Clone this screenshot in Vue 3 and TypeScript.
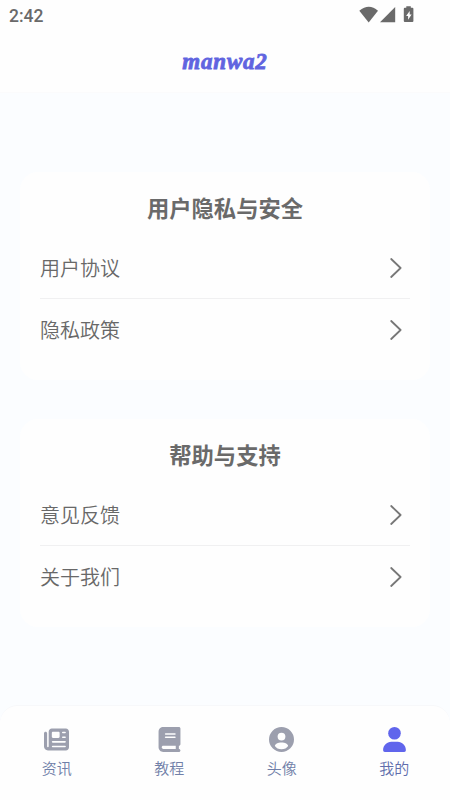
<script setup lang="ts">
interface Section {
  title: string
  items: string[]
}

interface Tab {
  label: string
  icon: 'news' | 'book' | 'avatar' | 'user'
  active?: boolean
}

const sections: Section[] = [
  { title: '用户隐私与安全', items: ['用户协议', '隐私政策'] },
  { title: '帮助与支持', items: ['意见反馈', '关于我们'] },
]

const tabs: Tab[] = [
  { label: '资讯', icon: 'news' },
  { label: '教程', icon: 'book' },
  { label: '头像', icon: 'avatar' },
  { label: '我的', icon: 'user', active: true },
]
</script>

<template>
  <div class="app">
    <header class="header">
      <div class="status">
        <span class="time">2:42</span>
        <svg class="status-icons" width="58" height="18" viewBox="0 0 58 18">
          <path d="M.3 5.2Q10-3 19 5.2L9.7 16.8Z" transform="translate(0 .6)" />
          <path d="M36.2 2v15.2H21Z" />
          <path
            fill-rule="evenodd"
            d="M47.3 1.2h4.5v1.5h1.600q1 0 1 1v12.400q0 1-1 1h-7.600q-1 0-1-1V3.700q0-1 1-1h1.500zM50.700 6l-3.600 5h2v3.800l3.500-5.200h-1.900z"
          />
        </svg>
      </div>
      <div class="brand">manwa2</div>
    </header>

    <main class="content">
      <section v-for="section in sections" :key="section.title" class="card">
        <h2 class="card-title">{{ section.title }}</h2>
        <ul class="list">
          <li v-for="item in section.items" :key="item" class="row">
            <span>{{ item }}</span>
            <svg class="chevron" width="12" height="20" viewBox="0 0 12 20">
              <path d="M1.200 1 10.600 10 1.200 19" />
            </svg>
          </li>
        </ul>
      </section>
    </main>

    <nav class="tabbar">
      <a v-for="tab in tabs" :key="tab.label" class="tab" :class="{ active: tab.active }">
        <svg v-if="tab.icon === 'news'" class="icon" viewBox="0 0 512 512">
          <path
            d="M96 96c0-35.3 28.7-64 64-64H448c35.3 0 64 28.7 64 64V416c0 35.3-28.7 64-64 64H80c-44.2 0-80-35.8-80-80V128c0-17.7 14.3-32 32-32s32 14.3 32 32V400c0 8.8 7.2 16 16 16s16-7.2 16-16V96zm64 24v80c0 13.3 10.7 24 24 24H296c13.3 0 24-10.7 24-24V120c0-13.3-10.7-24-24-24H184c-13.3 0-24 10.7-24 24zm208-8c0 8.8 7.2 16 16 16h48c8.8 0 16-7.2 16-16s-7.2-16-16-16H384c-8.8 0-16 7.2-16 16zm0 96c0 8.8 7.2 16 16 16h48c8.8 0 16-7.2 16-16s-7.2-16-16-16H384c-8.8 0-16 7.2-16 16zM160 304c0 8.8 7.2 16 16 16H432c8.8 0 16-7.2 16-16s-7.2-16-16-16H176c-8.8 0-16 7.2-16 16zm0 96c0 8.8 7.2 16 16 16H432c8.8 0 16-7.2 16-16s-7.2-16-16-16H176c-8.8 0-16 7.2-16 16z"
          />
        </svg>
        <svg v-else-if="tab.icon === 'book'" class="icon" viewBox="-32 0 512 512">
          <path
            d="M96 0C43 0 0 43 0 96V416c0 53 43 96 96 96H416c17.7 0 32-14.3 32-32s-14.3-32-32-32V384c17.7 0 32-14.3 32-32V32c0-17.7-14.3-32-32-32H96zm0 384H352v64H96c-17.7 0-32-14.3-32-32s14.3-32 32-32zm32-240c0-8.8 7.2-16 16-16H336c8.8 0 16 7.2 16 16s-7.2 16-16 16H144c-8.8 0-16-7.2-16-16zm16 48H336c8.8 0 16 7.2 16 16s-7.2 16-16 16H144c-8.8 0-16-7.2-16-16s7.2-16 16-16z"
          />
        </svg>
        <svg v-else-if="tab.icon === 'avatar'" class="icon" viewBox="0 0 25 25">
          <path
            fill-rule="evenodd"
            d="M12.5 0a12.5 12.5 0 1 1 0 25 12.5 12.5 0 0 1 0-25zm0 5.700a3.900 3.900 0 1 0 0 7.800 3.900 3.900 0 0 0 0-7.800zm0 9.700c-3.500 0-6.600 1.600-6.600 3.500 1.100 2 3.800 3.300 6.600 3.300s5.500-1.300 6.600-3.300c0-1.900-3.100-3.500-6.600-3.500z"
          />
        </svg>
        <svg v-else class="icon" viewBox="0 0 25 25">
          <circle cx="12.5" cy="6.3" r="6.300" />
          <path d="M1.100 23.300C1.100 18.400 4.900 14.800 9.300 14.800h6.400c4.400 0 8.200 3.600 8.200 8.500q0 1.700-1.700 1.700H2.800q-1.700 0-1.700-1.700z" />
        </svg>
        <span class="label">{{ tab.label }}</span>
      </a>
    </nav>
  </div>
</template>

<style>
body {
  background: #fcfeff;
}
</style>

<style scoped>
.app {
  display: flex;
  flex-direction: column;
  height: 800px;
  background: #fbfdff;
  color: #6a6a6a;
  font-family: 'Noto Sans CJK SC', sans-serif;
}

.header {
  height: 93px;
  box-sizing: border-box;
  border-bottom: 1px solid #fbfbfc;
  background: #fefefe;
}

.status {
  display: flex;
  justify-content: space-between;
  padding: 5px 33px 0 9px;
  height: 27px;
}

.time {
  font: 500 17.5px/22px Roboto, sans-serif;
  color: #6a6a6a;
}

.status-icons {
  fill: #6a6a6a;
}

.brand {
  margin-top: 18px;
  text-align: center;
  font: italic bold 23px/24px 'Liberation Serif', serif;
  letter-spacing: 0.8px;
  color: #6064e0;
  -webkit-text-stroke: 0.8px #6064e0;
}

.content {
  flex: 1;
  display: flex;
  flex-direction: column;
  gap: 39px;
  padding: 79px 20px 0;
}

.card {
  height: 208px;
  box-sizing: border-box;
  padding: 19px 20px 0;
  border-radius: 18px;
  background: #fefefe;
}

.card-title {
  margin: 0 0 14px;
  text-align: center;
  font-size: 22.3px;
  line-height: 33px;
  font-weight: 700;
}

.list {
  margin: 0;
  padding: 0;
  list-style: none;
}

.row {
  display: flex;
  align-items: center;
  justify-content: space-between;
  height: 60px;
  padding-right: 8px;
  font-size: 20px;
  font-weight: 350;
  line-height: 30px;
  color: #686868;
}

.row:not(:last-child) {
  border-bottom: 1px solid #f0f0f1;
}

.row:last-child {
  padding-top: 1px;
}

.chevron {
  fill: none;
  stroke: #777;
  stroke-width: 1.8;
  stroke-linecap: round;
  stroke-linejoin: round;
}

.tabbar {
  display: grid;
  grid-template-columns: repeat(4, 1fr);
  height: 95px;
  box-sizing: border-box;
  border-top: 1.5px solid #f7f8fa;
  border-radius: 18px 18px 0 0;
  background: #fefefe;
}

.tab {
  display: flex;
  flex-direction: column;
  align-items: center;
  gap: 5px;
  padding: 21px 0 0 1px;
}

.icon {
  width: 25px;
  height: 25px;
  fill: #9c9fae;
}

.active .icon {
  fill: #6065ec;
}

.label {
  font-size: 15px;
  font-weight: 350;
  line-height: 22px;
  color: #707fa8;
}

.active .label {
  color: #606dac;
}
</style>
